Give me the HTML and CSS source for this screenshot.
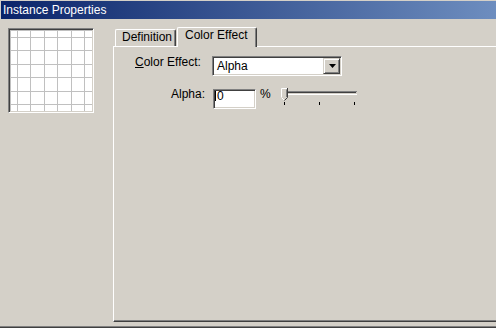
FILE: index.html
```html
<!DOCTYPE html>
<html lang="en">
<head>
  <meta charset="UTF-8" />
  <title>Instance Properties</title>
  <link rel="stylesheet" href="styles.css">
</head>
<body>
  <div class="window">
    <div class="titlebar">Instance Properties</div>

    <div class="main">
      <!-- Vista previa de la instancia -->
      <div class="preview">
        <svg width="82" height="81" viewBox="0 0 82 81">
          <rect width="82" height="81" fill="#fff"/>
          <path d="M0.5 0V81M7.5 0V81M20.5 0V81M34.5 0V81M47.5 0V81M61.5 0V81M74.5 0V81" stroke="#c0c0c0"/>
          <path d="M0 0.5H82M0 7.5H82M0 20.5H82M0 34.5H82M0 47.5H82M0 61.5H82M0 74.5H82" stroke="#c0c0c0"/>
        </svg>
      </div>

      <div class="tabs">
        <div class="tab-strip">
          <div class="tab">Definition</div>
          <div class="tab active">Color Effect</div>
        </div>

        <div class="panel">
          <div class="row">
            <div class="label"><u>C</u>olor Effect:</div>
            <div class="combo">
              <div class="combo-text">Alpha</div>
              <div class="combo-btn">
                <svg width="7" height="4" viewBox="0 0 7 4"><polygon points="0,0 7,0 3.5,4" fill="#000"/></svg>
              </div>
            </div>
          </div>

          <div class="row row-alpha">
            <div class="label right">Alpha:</div>
            <div class="textbox"><span class="caret"></span>0</div>
            <div class="unit">%</div>
            <svg class="slider" width="80" height="20" viewBox="0 0 80 20">
              <path d="M4 4.5H78" stroke="#808080"/>
              <path d="M5 5.5H77" stroke="#404040"/>
              <path d="M5 6.5H77" stroke="#d4d0c8"/>
              <path d="M4 7.5H78" stroke="#fff"/>
              <polygon points="2,1 9,1 9,10 5.5,13.5 2,10" fill="#d4d0c8"/>
              <path d="M2.5 10V1.5H8.5" stroke="#fff" fill="none"/>
              <path d="M7.5 2.5V10" stroke="#808080" fill="none"/>
              <path d="M8.5 1V10.5L5.5 13.5" stroke="#404040" fill="none"/>
              <path d="M2.5 10.5L5 13" stroke="#fff" fill="none"/>
              <path d="M5.5 15V18M40.5 15V18M75.5 15V18" stroke="#000"/>
            </svg>
          </div>
        </div>
      </div>
    </div>

    <div class="bottom-edge"></div>
  </div>
</body>
</html>
```

FILE: styles.css
```css
body {
  margin: 0;
  background: #d4d0c8;
  font-family: "Liberation Sans", Arial, sans-serif;
  font-size: 12px;
  color: #000;
}

.window {
  width: 496px;
  height: 328px;
  overflow: hidden;
  background: #d4d0c8;
  display: flex;
  flex-direction: column;
}

/* Barra de titulo */
.titlebar {
  margin: 1px 0 0 1px;
  height: 18px;
  line-height: 18px;
  padding-left: 2px;
  color: #fff;
  background: linear-gradient(to right, #0a246a, #a6caf0);
  background-size: 780px 100%;
  background-repeat: no-repeat;
  white-space: nowrap;
}

.main {
  display: flex;
  align-items: flex-start;
}

.preview {
  margin: 9px 0 0 8px;
  width: 82px;
  height: 81px;
  padding: 1px;
  border: 1px solid;
  border-color: #808080 #fff #fff #808080;
  box-shadow: inset 1px 1px #404040, inset -1px -1px #d4d0c8;
  flex-shrink: 0;
}

.preview svg {
  display: block;
}

/* Pestañas */
.tabs {
  margin: 8px 0 0 19px;
  width: 400px;
  flex-shrink: 0;
}

.tab-strip {
  display: flex;
  align-items: flex-end;
  height: 19px;
  padding-left: 2px;
}

.tab {
  box-sizing: border-box;
  width: 61px;
  height: 17px;
  line-height: 14px;
  padding: 0 6px;
  border-left: 1px solid #fff;
  border-top: 1px solid #fff;
  border-right: 1px solid #404040;
  border-radius: 2px 2px 0 0;
  box-shadow: inset -1px 0 #808080;
  white-space: nowrap;
}

.tab.active {
  width: 80px;
  height: 20px;
  margin: 0 0 -1px 1px;
  padding-left: 7px;
  position: relative;
  z-index: 1;
  background: #d4d0c8;
}

.panel {
  box-sizing: border-box;
  height: 276px;
  padding: 8px 0 0 21px;
  border-top: 1px solid #fff;
  border-left: 1px solid #fff;
  border-bottom: 1px solid #404040;
  box-shadow: inset 0 -1px #808080;
}

.row {
  display: flex;
  align-items: flex-start;
}

.label {
  width: 77px;
  line-height: 14px;
  flex-shrink: 0;
  white-space: nowrap;
}

.label.right {
  text-align: right;
  padding-right: 7px;
  width: 70px;
  margin-top: -2px;
}

/* Combo desplegable */
.combo {
  margin-top: 1px;
  width: 126px;
  height: 16px;
  display: flex;
  border: 1px solid;
  border-color: #808080 #fff #fff #808080;
  box-shadow: inset 1px 1px #404040, inset -1px -1px #d4d0c8;
  padding: 1px;
  background: #fff;
  box-sizing: content-box;
}

.combo-text {
  flex: 1;
  line-height: 16px;
  padding-left: 3px;
  background: #fff;
}

.combo-btn {
  box-sizing: border-box;
  width: 17px;
  height: 16px;
  border: 1px solid;
  border-color: #d4d0c8 #404040 #404040 #d4d0c8;
  box-shadow: inset 1px 1px #fff, inset -1px -1px #808080;
  background: #d4d0c8;
  display: flex;
  align-items: center;
  justify-content: center;
  padding-left: 1px;
}

.combo-btn svg {
  display: block;
}

.row-alpha {
  margin-top: 13px;
}

.textbox {
  margin-left: 1px;
  width: 39px;
  height: 16px;
  padding: 1px;
  border: 1px solid;
  border-color: #808080 #fff #fff #808080;
  box-shadow: inset 1px 1px #404040, inset -1px -1px #d4d0c8;
  background: #fff;
  line-height: 10px;
  display: flex;
  align-items: flex-start;
}

.caret {
  width: 1px;
  height: 10px;
  margin: 0 1px 0 0;
  background: #000;
}

.unit {
  margin: -2px 0 0 4px;
  line-height: 14px;
}

.slider {
  display: block;
  margin: -2px 0 0 8px;
}

.bottom-edge {
  margin-top: auto;
  border-top: 1px solid #808080;
  border-bottom: 1px solid #404040;
}
```
